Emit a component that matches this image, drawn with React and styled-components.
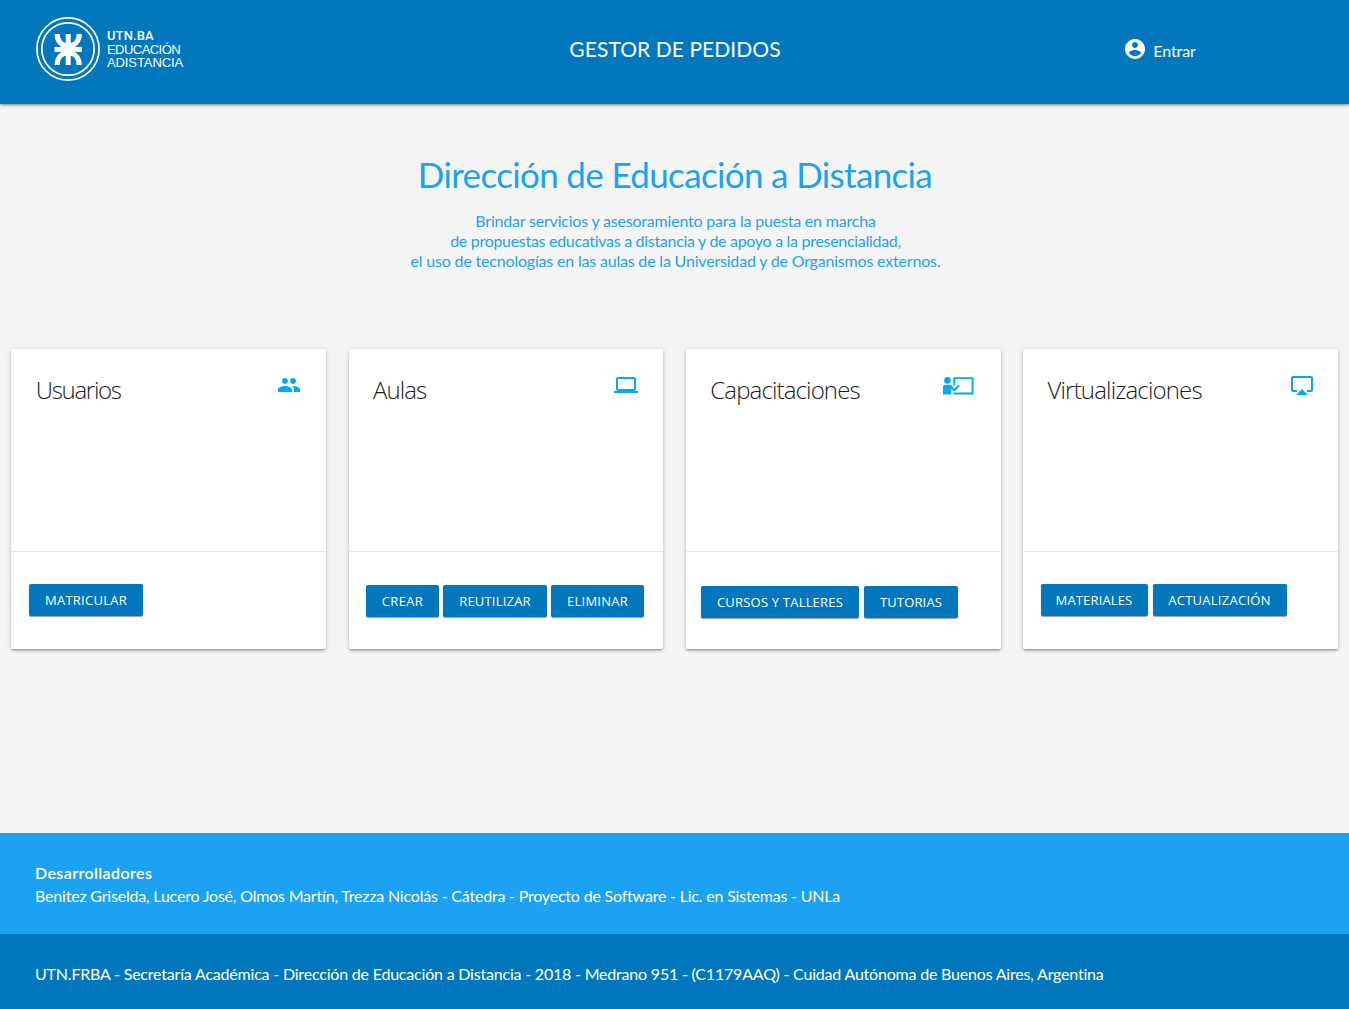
import React from "react";
import styled, { createGlobalStyle } from "styled-components";

const GlobalStyle = createGlobalStyle`
  *, *::before, *::after { box-sizing: border-box; }
  body {
    margin: 0;
    background: #f5f5f5;
    font-family: Lato, "Gill Sans", sans-serif;
    font-size: 16px;
    font-variant-ligatures: no-common-ligatures;
  }
`;

const Page = styled.div`
  display: flex;
  flex-direction: column;
  min-height: 1009px;
`;

const Header = styled.header`
  display: grid;
  grid-template-columns: 1fr 1fr 1fr;
  align-items: start;
  height: 104px;
  background: #0277bd;
  color: #fff;
  box-shadow: 0 1px 3px rgba(0, 0, 0, 0.5);
`;

const Brand = styled.a`
  display: flex;
  align-items: center;
  gap: 7px;
  padding: 17px 0 0 36px;
`;

const BrandText = styled.div`
  display: flex;
  flex-direction: column;
  padding-top: 1px;
`;

const BrandLine = styled.span`
  font-family: ${(p) => (p.$strong ? "Roboto" : '"Liberation Sans"')}, sans-serif;
  font-weight: ${(p) => (p.$strong ? 500 : 400)};
  font-size: 13px;
  line-height: 13.4px;
  letter-spacing: ${(p) => p.$spacing}px;
  white-space: nowrap;
`;

const HeaderTitle = styled.div`
  padding: 36px 0 0 1px;
  font-size: 21px;
  line-height: 26px;
  letter-spacing: 0.07px;
  text-align: center;
`;

const Login = styled.a`
  display: flex;
  gap: 6px;
  padding: 37px 0 0 224px;
  line-height: 28px;
  letter-spacing: -0.1px;
`;

const Main = styled.main`
  flex: 1;
`;

const Intro = styled.section`
  padding-top: 49px;
  color: #1da1f2;
  text-align: center;
`;

const Heading = styled.h1`
  margin: 0;
  padding-left: 1px;
  font-size: 35px;
  font-weight: 400;
  line-height: 42px;
  letter-spacing: -0.65px;
`;

const Lead = styled.p`
  display: flex;
  flex-direction: column;
  align-items: center;
  margin: 16px 0 0;
  padding-left: 2px;
  line-height: 20px;
`;

const LeadLine = styled.span`
  letter-spacing: ${(p) => p.$spacing}px;
`;

const Cards = styled.section`
  display: grid;
  grid-template-columns: repeat(4, 1fr);
  gap: 22.5px;
  padding: 78px 11.25px 0;
`;

const Card = styled.article`
  display: flex;
  flex-direction: column;
  height: 300px;
  background: #fff;
  border-radius: 2px;
  box-shadow: 0 2px 2px 0 rgba(0, 0, 0, 0.14), 0 3px 1px -2px rgba(0, 0, 0, 0.12),
    0 1px 5px 0 rgba(0, 0, 0, 0.2);
`;

const CardHead = styled.div`
  display: flex;
  justify-content: space-between;
  align-items: flex-start;
  height: 202px;
  padding: 24px ${(p) => p.$right}px 0 24.5px;
`;

const CardTitle = styled.h2`
  margin: 0;
  color: #1c1c1c;
  font-family: "Open Sans", sans-serif;
  font-size: 24px;
  font-weight: 300;
  line-height: 34px;
  letter-spacing: ${(p) => p.$spacing}px;
`;

const CardActions = styled.div`
  display: flex;
  align-items: flex-start;
  flex: 1;
  gap: ${(p) => p.$gap}px;
  padding: ${(p) => p.$top}px 0 0 ${(p) => p.$left}px;
  border-top: 1px solid #e8e8e8;
`;

const Button = styled.button`
  width: ${(p) => p.$width}px;
  height: 32px;
  padding: 0;
  border: 0;
  border-radius: 2px;
  background: #0277bd;
  box-shadow: 0 1px 1px rgba(0, 0, 0, 0.4);
  color: #fff;
  font-family: "Open Sans", sans-serif;
  font-size: 13px;
  line-height: 32px;
  letter-spacing: ${(p) => p.$spacing}px;
  white-space: nowrap;
`;

const Developers = styled.section`
  height: 101px;
  padding: 28px 0 0 35px;
  background: #1da1f2;
  color: #fff;
  line-height: 23px;
`;

const DevelopersTitle = styled.div`
  font-weight: 600;
  letter-spacing: 0.4px;
`;

const FooterText = styled.div`
  letter-spacing: -0.2px;
  white-space: nowrap;
`;

const Legal = styled.footer`
  height: 75px;
  padding: 28px 0 0 35px;
  background: #0277bd;
  color: #fff;
  line-height: 23px;
`;

const Emblem = () => (
  <svg width="64" height="64" viewBox="0 0 64 64" fill="none" stroke="#fff">
    <circle cx="32" cy="32" r="31.1" strokeWidth="1.7" />
    <circle cx="32" cy="32" r="26.2" strokeWidth="1.7" />
    <g strokeWidth="5">
      <path d="M32.200 17v31" />
      <path d="M18.500 32.400h27.400" />
      <path d="M21.200 17c0 7.500 4.600 12 11 12s11-4.500 11-12" strokeWidth="5.200" />
      <path d="M21.200 48c0-7.500 4.600-12 11-12s11 4.500 11 12" strokeWidth="5.200" />
    </g>
  </svg>
);

const Glyph = ({ d, color = "#03a9f4" }) => (
  <svg width="24" height="24" viewBox="0 0 24 24" fill={color}>
    <path d={d} />
  </svg>
);

const ICONS = {
  account:
    "M12 2C6.480 2 2 6.480 2 12s4.480 10 10 10 10-4.480 10-10S17.520 2 12 2zm0 3c1.660 0 3 1.340 3 3s-1.340 3-3 3-3-1.340-3-3 1.340-3 3-3zm0 14.200c-2.500 0-4.710-1.280-6-3.220.030-1.990 4-3.080 6-3.080 1.990 0 5.970 1.090 6 3.080-1.290 1.940-3.500 3.220-6 3.220z",
  people:
    "M16 11c1.660 0 2.990-1.340 2.990-3S17.660 5 16 5c-1.660 0-3 1.340-3 3s1.340 3 3 3zm-8 0c1.660 0 2.990-1.340 2.990-3S9.660 5 8 5C6.340 5 5 6.340 5 8s1.340 3 3 3zm0 2c-2.330 0-7 1.170-7 3.500V19h14v-2.500c0-2.330-4.670-3.500-7-3.500zm8 0c-.290 0-.620.020-.970.050 1.160.840 1.970 1.970 1.970 3.450V19h6v-2.500c0-2.330-4.670-3.500-7-3.500z",
  laptop:
    "M20 18c1.100 0 1.990-.900 1.990-2L22 6c0-1.100-.900-2-2-2H4c-1.100 0-2 .900-2 2v10c0 1.100.900 2 2 2H0v2h24v-2h-4zM4 6h16v10H4V6z",
  airplay:
    "M6 22h12l-6-6zM21 3H3c-1.100 0-2 .900-2 2v12c0 1.100.900 2 2 2h4v-2H3V5h18v12h-4v2h4c1.100 0 2-.900 2-2V5c0-1.100-.900-2-2-2z",
};

const TrainingIcon = () => (
  <svg width="34" height="24" viewBox="0 0 34 24" fill="#03a9f4">
    <circle cx="7.500" cy="7.400" r="3.300" />
    <path d="M3 21.600v-7.400c0-1.700.9-2.500 2.400-2.500h4.100c1.100 0 1.700.4 2.400 1.200l2.600 2.900 3.700-4.200 1.500 1.300-5.200 5.900-3.200-2.700v5.500z" />
    <path d="M13.400 12.500V4.200h20.100v17.400H13.400v-2h18.200V6.100H15.300v6.400z" />
  </svg>
);

const CARDS = [
  {
    title: "Usuarios",
    spacing: -1.3,
    icon: <Glyph d={ICONS.people} />,
    right: 25.4,
    top: 32,
    left: 17.75,
    gap: 4,
    buttons: [["MATRICULAR", 114, 0.27]],
  },
  {
    title: "Aulas",
    spacing: -0.95,
    icon: <Glyph d={ICONS.laptop} />,
    right: 25,
    top: 33,
    left: 17.5,
    gap: 4,
    buttons: [
      ["CREAR", 73, 0.33],
      ["REUTILIZAR", 104, 0.2],
      ["ELIMINAR", 93, 0.25],
    ],
  },
  {
    title: "Capacitaciones",
    spacing: -0.86,
    icon: <TrainingIcon />,
    right: 26.500,
    top: 34,
    left: 15.25,
    gap: 5,
    buttons: [
      ["CURSOS Y TALLERES", 158, 0.2],
      ["TUTORIAS", 94, 0.15],
    ],
  },
  {
    title: "Virtualizaciones",
    spacing: -0.83,
    icon: <Glyph d={ICONS.airplay} />,
    right: 23.700,
    top: 32,
    left: 17.5,
    gap: 5,
    buttons: [
      ["MATERIALES", 107, 0.15],
      ["ACTUALIZACIÓN", 134, 0.27],
    ],
  },
];

export default function App() {
  return (
    <Page>
      <GlobalStyle />
      <Header>
        <Brand>
          <Emblem />
          <BrandText>
            <BrandLine $strong $spacing={0.1}>UTN.BA</BrandLine>
            <BrandLine $spacing={-0.55}>EDUCACIÓN</BrandLine>
            <BrandLine $spacing={-0.1}>ADISTANCIA</BrandLine>
          </BrandText>
        </Brand>
        <HeaderTitle>GESTOR DE PEDIDOS</HeaderTitle>
        <Login>
          <Glyph d={ICONS.account} color="#fff" />
          Entrar
        </Login>
      </Header>
      <Main>
        <Intro>
          <Heading>Dirección de Educación a Distancia</Heading>
          <Lead>
            <LeadLine $spacing={-0.2}>
              Brindar servicios y asesoramiento para la puesta en marcha
            </LeadLine>
            <LeadLine $spacing={-0.3}>
              de propuestas educativas a distancia y de apoyo a la presencialidad,
            </LeadLine>
            <LeadLine $spacing={-0.19}>
              el uso de tecnologías en las aulas de la Universidad y de Organismos externos.
            </LeadLine>
          </Lead>
        </Intro>
        <Cards>
          {CARDS.map((card) => (
            <Card key={card.title}>
              <CardHead $right={card.right}>
                <CardTitle $spacing={card.spacing}>{card.title}</CardTitle>
                {card.icon}
              </CardHead>
              <CardActions $top={card.top} $left={card.left} $gap={card.gap}>
                {card.buttons.map(([label, width, spacing]) => (
                  <Button key={label} $width={width} $spacing={spacing}>
                    {label}
                  </Button>
                ))}
              </CardActions>
            </Card>
          ))}
        </Cards>
      </Main>
      <Developers>
        <DevelopersTitle>Desarrolladores</DevelopersTitle>
        <FooterText>
          Benitez Griselda, Lucero José, Olmos Martín, Trezza Nicolás - Cátedra - Proyecto de
          Software - Lic. en Sistemas - UNLa
        </FooterText>
      </Developers>
      <Legal>
        <FooterText>
          UTN.FRBA - Secretaría Académica - Dirección de Educación a Distancia - 2018 - Medrano
          951 - (C1179AAQ) - Cuidad Autónoma de Buenos Aires, Argentina
        </FooterText>
      </Legal>
    </Page>
  );
}
